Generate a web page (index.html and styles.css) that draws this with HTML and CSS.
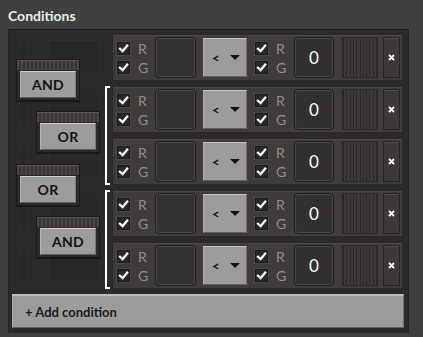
FILE: index.html
```html
<!DOCTYPE html>
<html>
<head>
<meta charset="utf-8">
<title>Conditions</title>
<link rel="stylesheet" href="styles.css">
</head>
<body>
<div class="window">
  <div class="title">Conditions</div>
  <div class="panel">
    <div class="content">
      <div class="logic">
        <div class="deco"><span class="d-narrow"></span><span class="d-wide"></span></div>
        <div class="deco"><span class="d-narrow"></span><span class="d-wide"></span></div>
        <div class="deco"><span class="d-narrow"></span><span class="d-wide"></span></div>
        <div class="deco"><span class="d-narrow"></span><span class="d-wide"></span></div>
        <div class="deco"><span class="d-narrow"></span><span class="d-wide"></span></div>

        <div class="op op-1"><div class="op-strip"></div><div class="op-btn">AND</div></div>
        <div class="op op-2"><div class="op-strip"></div><div class="op-btn">OR</div></div>
        <div class="op op-3"><div class="op-strip"></div><div class="op-btn">OR</div></div>
        <div class="op op-4"><div class="op-strip"></div><div class="op-btn">AND</div></div>
      </div>

      <div class="list">
        <div class="group">
          <div class="bracket-space"></div>
          <div class="rows">
            <div class="row">
              <div class="pair">
                <span class="check"><svg viewBox="0 0 13 13" width="13" height="13"><polyline points="3,6.8 5.6,9.2 10.2,3.6" /></svg></span><span class="letter">R</span>
                <span class="check"><svg viewBox="0 0 13 13" width="13" height="13"><polyline points="3,6.8 5.6,9.2 10.2,3.6" /></svg></span><span class="letter">G</span>
              </div>
              <div class="slot"></div>
              <div class="cmp"><span class="cmp-op">&lt;</span><span class="tri"></span></div>
              <div class="pair pair-2">
                <span class="check"><svg viewBox="0 0 13 13" width="13" height="13"><polyline points="3,6.8 5.6,9.2 10.2,3.6" /></svg></span><span class="letter">R</span>
                <span class="check"><svg viewBox="0 0 13 13" width="13" height="13"><polyline points="3,6.8 5.6,9.2 10.2,3.6" /></svg></span><span class="letter">G</span>
              </div>
              <div class="const">0</div>
              <div class="stripes"></div>
              <div class="close"><svg viewBox="0 0 7 7" width="7" height="7"><path d="M1 1 L6 6 M6 1 L1 6" /></svg></div>
            </div>
          </div>
        </div>

        <div class="group">
          <div class="bracket"></div>
          <div class="rows">
            <div class="row">
              <div class="pair">
                <span class="check"><svg viewBox="0 0 13 13" width="13" height="13"><polyline points="3,6.8 5.6,9.2 10.2,3.6" /></svg></span><span class="letter">R</span>
                <span class="check"><svg viewBox="0 0 13 13" width="13" height="13"><polyline points="3,6.8 5.6,9.2 10.2,3.6" /></svg></span><span class="letter">G</span>
              </div>
              <div class="slot"></div>
              <div class="cmp"><span class="cmp-op">&lt;</span><span class="tri"></span></div>
              <div class="pair pair-2">
                <span class="check"><svg viewBox="0 0 13 13" width="13" height="13"><polyline points="3,6.8 5.6,9.2 10.2,3.6" /></svg></span><span class="letter">R</span>
                <span class="check"><svg viewBox="0 0 13 13" width="13" height="13"><polyline points="3,6.8 5.6,9.2 10.2,3.6" /></svg></span><span class="letter">G</span>
              </div>
              <div class="const">0</div>
              <div class="stripes"></div>
              <div class="close"><svg viewBox="0 0 7 7" width="7" height="7"><path d="M1 1 L6 6 M6 1 L1 6" /></svg></div>
            </div>
            <div class="row">
              <div class="pair">
                <span class="check"><svg viewBox="0 0 13 13" width="13" height="13"><polyline points="3,6.8 5.6,9.2 10.2,3.6" /></svg></span><span class="letter">R</span>
                <span class="check"><svg viewBox="0 0 13 13" width="13" height="13"><polyline points="3,6.8 5.6,9.2 10.2,3.6" /></svg></span><span class="letter">G</span>
              </div>
              <div class="slot"></div>
              <div class="cmp"><span class="cmp-op">&lt;</span><span class="tri"></span></div>
              <div class="pair pair-2">
                <span class="check"><svg viewBox="0 0 13 13" width="13" height="13"><polyline points="3,6.8 5.6,9.2 10.2,3.6" /></svg></span><span class="letter">R</span>
                <span class="check"><svg viewBox="0 0 13 13" width="13" height="13"><polyline points="3,6.8 5.6,9.2 10.2,3.6" /></svg></span><span class="letter">G</span>
              </div>
              <div class="const">0</div>
              <div class="stripes"></div>
              <div class="close"><svg viewBox="0 0 7 7" width="7" height="7"><path d="M1 1 L6 6 M6 1 L1 6" /></svg></div>
            </div>
          </div>
        </div>

        <div class="group">
          <div class="bracket"></div>
          <div class="rows">
            <div class="row">
              <div class="pair">
                <span class="check"><svg viewBox="0 0 13 13" width="13" height="13"><polyline points="3,6.8 5.6,9.2 10.2,3.6" /></svg></span><span class="letter">R</span>
                <span class="check"><svg viewBox="0 0 13 13" width="13" height="13"><polyline points="3,6.8 5.6,9.2 10.2,3.6" /></svg></span><span class="letter">G</span>
              </div>
              <div class="slot"></div>
              <div class="cmp"><span class="cmp-op">&lt;</span><span class="tri"></span></div>
              <div class="pair pair-2">
                <span class="check"><svg viewBox="0 0 13 13" width="13" height="13"><polyline points="3,6.8 5.6,9.2 10.2,3.6" /></svg></span><span class="letter">R</span>
                <span class="check"><svg viewBox="0 0 13 13" width="13" height="13"><polyline points="3,6.8 5.6,9.2 10.2,3.6" /></svg></span><span class="letter">G</span>
              </div>
              <div class="const">0</div>
              <div class="stripes"></div>
              <div class="close"><svg viewBox="0 0 7 7" width="7" height="7"><path d="M1 1 L6 6 M6 1 L1 6" /></svg></div>
            </div>
            <div class="row">
              <div class="pair">
                <span class="check"><svg viewBox="0 0 13 13" width="13" height="13"><polyline points="3,6.8 5.6,9.2 10.2,3.6" /></svg></span><span class="letter">R</span>
                <span class="check"><svg viewBox="0 0 13 13" width="13" height="13"><polyline points="3,6.8 5.6,9.2 10.2,3.6" /></svg></span><span class="letter">G</span>
              </div>
              <div class="slot"></div>
              <div class="cmp"><span class="cmp-op">&lt;</span><span class="tri"></span></div>
              <div class="pair pair-2">
                <span class="check"><svg viewBox="0 0 13 13" width="13" height="13"><polyline points="3,6.8 5.6,9.2 10.2,3.6" /></svg></span><span class="letter">R</span>
                <span class="check"><svg viewBox="0 0 13 13" width="13" height="13"><polyline points="3,6.8 5.6,9.2 10.2,3.6" /></svg></span><span class="letter">G</span>
              </div>
              <div class="const">0</div>
              <div class="stripes"></div>
              <div class="close"><svg viewBox="0 0 7 7" width="7" height="7"><path d="M1 1 L6 6 M6 1 L1 6" /></svg></div>
            </div>
          </div>
        </div>
      </div>
    </div>
    <div class="add">+ Add condition</div>
  </div>
</div>
</body>
</html>
```

FILE: styles.css
```css
* { box-sizing: border-box; }

html, body {
  margin: 0;
  padding: 0;
  background: #3f3f3f;
  font-family: "Lato", "Noto Sans", sans-serif;
}

.window {
  width: 423px;
  height: 337px;
  background: #3f3f3f;
  padding: 0 14px 4px 8px;
}

.title {
  height: 29px;
  padding-top: 7px;
  font-size: 14px;
  line-height: 17px;
  font-weight: 700;
  color: #ececec;
}

.panel {
  width: 401px;
  height: 304px;
  background: #2a2a2a;
  border-top: 1px solid #1e1e1e;
  border-right: 1px solid #232323;
  padding: 4px 5px 5px 4px;
  box-shadow: inset 1px 0 0 #242424;
}

.content {
  display: flex;
  height: 255px;
}

/* left logic column */
.logic {
  position: relative;
  width: 93px;
  display: flex;
  flex-direction: column;
  gap: 5px;
}

.deco {
  height: 47px;
  position: relative;
  display: flex;
  padding-top: 6px;
}

.deco span {
  height: 34px;
  border: 1px solid #2f2f2f;
  background: #282828;
}

.d-narrow { width: 9px; margin-left: 7px; }
.d-wide { width: 52px; margin-left: 20px; }

.op {
  position: absolute;
  width: 64px;
  height: 42px;
  background: #2e2927;
  border: 1px solid #1d1918;
  box-shadow: 0 1px 0 #1a1716;
  display: flex;
  flex-direction: column;
  align-items: center;
}

.op-1 { left: 4px; top: 25px; }
.op-2 { left: 24px; top: 77px; }
.op-3 { left: 4px; top: 130px; }
.op-4 { left: 24px; top: 182px; }

.op-strip {
  width: 100%;
  height: 10px;
  background: repeating-linear-gradient(90deg, #4b4644 0 2px, #3a3533 2px 4px);
  border-top: 1px solid #5a5553;
}

.op-btn {
  margin-top: 1px;
  width: 56px;
  height: 27px;
  background: #9c9c9c;
  border-top: 1px solid #cfcfcf;
  border-bottom: 1px solid #5e5e5e;
  border-left: 1px solid #b2b2b2;
  border-right: 1px solid #7a7a7a;
  font-size: 14px;
  font-weight: 700;
  color: #121212;
  display: flex;
  align-items: center;
  justify-content: center;
  letter-spacing: 0.3px;
}

/* condition list */
.list {
  display: flex;
  flex-direction: column;
  gap: 5px;
}

.group {
  display: flex;
}

.bracket-space,
.bracket {
  width: 7px;
  flex: none;
}

.bracket {
  border-left: 2px solid #ffffff;
  border-top: 2px solid #ffffff;
  border-bottom: 2px solid #ffffff;
  width: 5px;
  margin-right: 2px;
}

.rows {
  display: flex;
  flex-direction: column;
  gap: 5px;
}

.row {
  width: 291px;
  height: 47px;
  background: #3f3c3b;
  border: 1px solid #2b2827;
  box-shadow: inset 0 1px 0 #4a4645;
  display: flex;
  align-items: center;
}

.pair {
  margin-left: 4px;
  width: 30px;
  display: grid;
  grid-template-columns: 13px auto;
  column-gap: 8px;
  row-gap: 6px;
  align-items: center;
}

.pair-2 { margin-left: 8px; }

.check {
  width: 13px;
  height: 13px;
  background: #2a2929;
  border: 1px solid #1e1d1d;
  box-shadow: 0 0 0 1px #4a4746;
  display: block;
  position: relative;
}

.check svg {
  position: absolute;
  left: -1px;
  top: -1px;
}

.check polyline {
  fill: none;
  stroke: #ffffff;
  stroke-width: 2.3;
  stroke-linecap: square;
}

.letter {
  font-size: 14px;
  line-height: 13px;
  color: #8e8e8e;
}

.slot {
  margin-left: 8px;
  width: 41px;
  height: 41px;
  background: #333232;
  border: 1px solid #1f1e1e;
  border-radius: 4px;
  box-shadow: inset 0 0 0 1px #4b4948;
}

.cmp {
  margin-left: 7px;
  width: 44px;
  height: 39px;
  background: #9c9c9c;
  border-top: 1px solid #c4c4c4;
  border-left: 1px solid #b0b0b0;
  border-right: 1px solid #747474;
  border-bottom: 1px solid #5e5e5e;
  display: flex;
  align-items: center;
  padding-left: 8px;
}

.cmp-op {
  font-size: 13px;
  font-weight: 700;
  color: #111;
  line-height: 12px;
}

.tri {
  margin-left: 10px;
  width: 0;
  height: 0;
  border-left: 5px solid transparent;
  border-right: 5px solid transparent;
  border-top: 5px solid #111;
}

.const {
  margin-left: 9px;
  width: 40px;
  height: 41px;
  background: #313030;
  border: 1px solid #1f1e1e;
  border-radius: 4px;
  box-shadow: inset 0 0 0 1px #4b4948;
  color: #ffffff;
  font-size: 17px;
  display: flex;
  align-items: center;
  justify-content: center;
}

.stripes {
  margin-left: 8px;
  width: 36px;
  height: 41px;
  border: 1px solid #2c2928;
  background: repeating-linear-gradient(90deg, #2c2928 0 1px, #3c3837 1px 3.3px);
}

.close {
  margin-left: 5px;
  width: 17px;
  height: 41px;
  background: #3d3938;
  border: 1px solid #282423;
  box-shadow: inset 0 1px 0 #524d4c;
  display: flex;
  align-items: center;
  justify-content: center;
}

.close path {
  stroke: #ffffff;
  stroke-width: 1.8;
  fill: none;
}

.add {
  margin-top: 5px;
  width: 392px;
  height: 34px;
  background: #9b9b9b;
  border-top: 2px solid #bdbdbd;
  border-left: 1px solid #aaaaaa;
  border-right: 1px solid #747474;
  border-bottom: 1px solid #626262;
  padding-left: 12px;
  display: flex;
  align-items: center;
  font-size: 13px;
  font-weight: 700;
  color: #1b1b1b;
}
```
